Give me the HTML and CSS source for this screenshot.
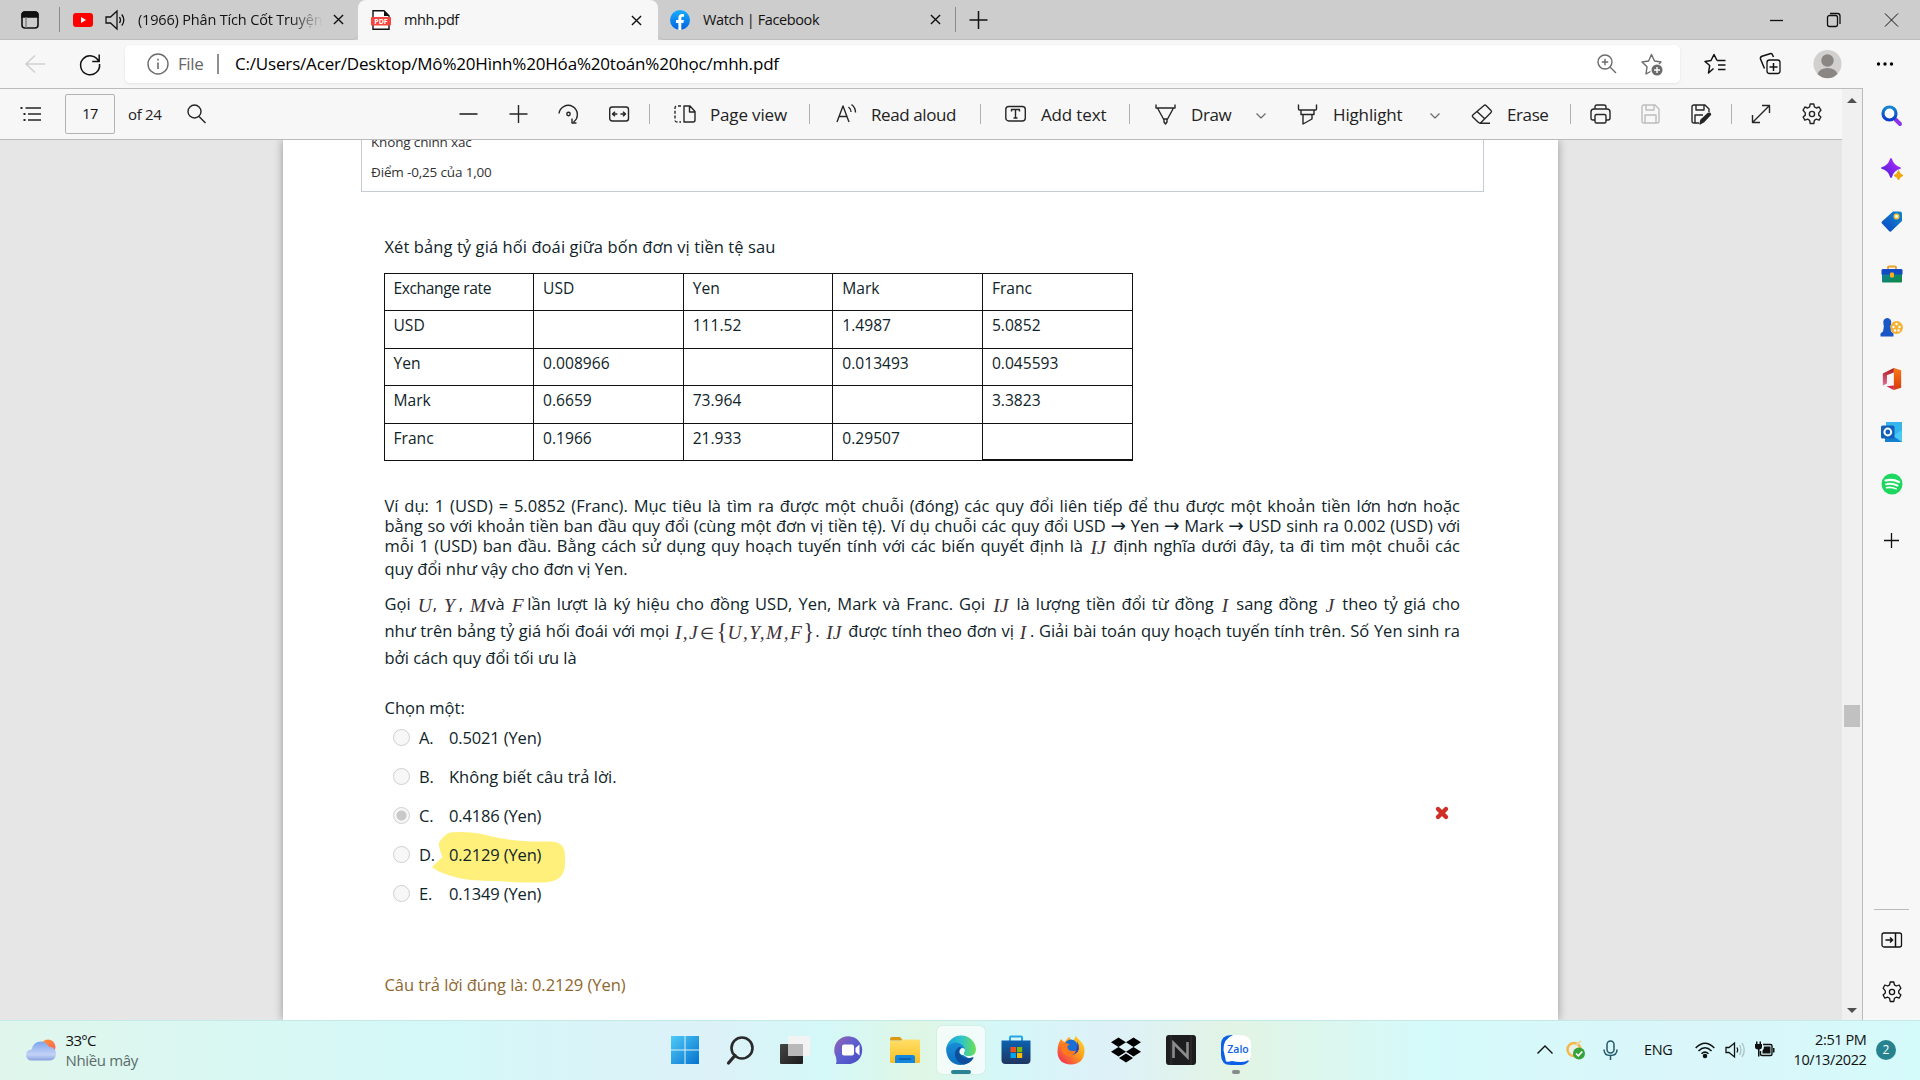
FILE: index.html
```html
<!DOCTYPE html>
<html lang="vi">
<head>
<meta charset="utf-8">
<title>mhh.pdf</title>
<link rel="stylesheet" href="styles.css">
</head>
<body>
<svg class="defs" width="0" height="0">
  <defs>
    <symbol id="close" viewBox="0 0 12 12"><path d="M1 1l10 10M11 1L1 11"/></symbol>
    <symbol id="gear" viewBox="0 0 22 22"><path d="M9.200 1h3.600l.6 2.900 1.900 1.100 2.800-1 1.800 3.200L17.700 9.900v2.200l2.200 1.900-1.800 3.200-2.800-1-1.900 1.100-.6 3.200H9.200l-.6-3.200-1.900-1.100-2.800 1-1.800-3.200L4.300 12.100V9.900L2.100 7.200 3.900 4l2.800 1 1.900-1.100z" stroke-linejoin="round"/><circle cx="11" cy="11" r="2.600"/></symbol>
    <symbol id="chev" viewBox="0 0 10 6"><path d="M.5 .5L5 5 9.500.5"/></symbol>
    <linearGradient id="gWin" x1="0" y1="0" x2="1" y2="1"><stop offset="0" stop-color="#4fcbf8"/><stop offset="1" stop-color="#0672cf"/></linearGradient>
    <linearGradient id="gMag" x1="0" y1="0" x2="0" y2="1"><stop offset="0" stop-color="#1787cf"/><stop offset="1" stop-color="#0a3bcb"/></linearGradient>
    <linearGradient id="gSpark" x1="0" y1="1" x2="1" y2="0"><stop offset="0" stop-color="#4a1fd6"/><stop offset="1" stop-color="#b52bff"/></linearGradient>
    <linearGradient id="gTag" x1="0" y1="1" x2="1" y2="0"><stop offset="0" stop-color="#0b43c9"/><stop offset="1" stop-color="#1389c6"/></linearGradient>
    <linearGradient id="gCase" x1="0" y1="0" x2="1" y2="1"><stop offset="0" stop-color="#1180a6"/><stop offset="1" stop-color="#0f8a3c"/></linearGradient>
    <linearGradient id="gOff" x1="0" y1="0" x2="0" y2="1"><stop offset="0" stop-color="#f77b16"/><stop offset="1" stop-color="#d8380c"/></linearGradient>
    <linearGradient id="gOffL" x1="0" y1="0" x2="0" y2="1"><stop offset="0" stop-color="#b01818"/><stop offset="1" stop-color="#e0709c"/></linearGradient>
    <linearGradient id="gChat" x1="0" y1="0" x2="1" y2="1"><stop offset="0" stop-color="#9a62b4"/><stop offset=".5" stop-color="#5a5fcf"/><stop offset="1" stop-color="#4a49c4"/></linearGradient>
    <linearGradient id="gFold" x1="0" y1="0" x2="0" y2="1"><stop offset="0" stop-color="#ffdf68"/><stop offset="1" stop-color="#fbbf22"/></linearGradient>
    <linearGradient id="gEdgeT" x1="0" y1="0" x2="1" y2="0"><stop offset="0" stop-color="#1b9ddb"/><stop offset=".5" stop-color="#2cc3cf"/><stop offset="1" stop-color="#6fdf4e"/></linearGradient>
    <linearGradient id="gEdgeL" x1="0" y1="0" x2="0" y2="1"><stop offset="0" stop-color="#1a8ed8"/><stop offset="1" stop-color="#0b6fc0"/></linearGradient>
    <linearGradient id="gStore" x1="0" y1="0" x2="0" y2="1"><stop offset="0" stop-color="#0b62b0"/><stop offset="1" stop-color="#1f3560"/></linearGradient>
    <linearGradient id="gFox" x1="1" y1="0" x2="0" y2="1"><stop offset="0" stop-color="#ffe030"/><stop offset=".45" stop-color="#ff9a1c"/><stop offset="1" stop-color="#ee1a5d"/></linearGradient>
    <linearGradient id="gTask" x1="0" y1="0" x2="1" y2="1"><stop offset="0" stop-color="#454545"/><stop offset="1" stop-color="#1c1c1c"/></linearGradient>
    <linearGradient id="gSun" x1="0" y1="0" x2="1" y2="1"><stop offset="0" stop-color="#ff9c2c"/><stop offset="1" stop-color="#ff5560"/></linearGradient>
    <linearGradient id="gCloud" x1="0" y1="0" x2="0" y2="1"><stop offset="0" stop-color="#7fa5ee"/><stop offset=".7" stop-color="#c3d2f5"/><stop offset="1" stop-color="#86a0e0"/></linearGradient>
    <linearGradient id="gFb" x1="0" y1="0" x2="0" y2="1"><stop offset="0" stop-color="#18acfe"/><stop offset="1" stop-color="#0163e0"/></linearGradient>
  </defs>
</svg>

<header class="tabs">
  <div class="tab tab-first">
    <svg class="i18 ink" viewBox="0 0 18 18"><rect x="1" y="1" width="16" height="16" rx="3" stroke-width="1.600"/><path d="M1 5V4a3 3 0 0 1 3-3h10a3 3 0 0 1 3 3v2H1z" fill="#111"/><path d="M5 6v11" stroke="#777"/></svg>
    <i class="bar"></i>
    <svg class="yt" viewBox="0 0 20 14"><rect width="20" height="14" rx="3" fill="#f00"/><path d="M8 4v6l5-3z" fill="#fff"/></svg>
    <svg class="i20 ink" viewBox="0 0 20 20"><path d="M1 7h4.500L12 1v18l-6.500-6H1zM14.500 7q2 3 0 6M16.800 4.500q4 5.500 0 11" stroke-width="1.300"/></svg>
    <span class="tabtext fade">(1966) Phân Tích Cốt Truyện</span>
    <svg class="x ink"><use href="#close"/></svg>
  </div>
  <div class="tab tab-active">
    <svg class="i20" viewBox="0 0 20 20"><path d="M2 .8h11l5 5V19.200H2z" fill="#fff" stroke="#111" stroke-width="1.400"/><path d="M13 1v5h5z" fill="#111"/><rect x="0" y="7" width="20" height="8.500" rx="1" fill="#f4443e"/><text x="10" y="13.700" class="pdfmark">PDF</text></svg>
    <span class="tabtext">mhh.pdf</span>
    <svg class="x ink"><use href="#close"/></svg>
  </div>
  <div class="tab tab-last">
    <svg class="i20" viewBox="0 0 20 20"><circle cx="10" cy="10" r="10" fill="url(#gFb)"/><path d="M8.400 20v-7H6v-3h2.400V8c0-2.600 1.500-4 3.800-4 .9 0 1.800.2 1.800.2v2.500h-1.200c-1.200 0-1.500.7-1.500 1.500V10h2.600l-.5 3h-2.100v7z" fill="#fff"/></svg>
    <span class="tabtext">Watch | Facebook</span>
    <svg class="x ink"><use href="#close"/></svg>
    <i class="bar"></i>
    <svg class="i18 ink" viewBox="0 0 18 18"><path d="M8.500 0v18M-.5 9h18" stroke-width="1.500"/></svg>
  </div>
  <div class="winbtns">
    <svg class="i14 ink" viewBox="0 0 14 14"><path d="M0 7.500h13"/></svg>
    <svg class="i14 ink" viewBox="0 0 14 14"><rect x=".5" y="2.500" width="10" height="11" rx="2"/><path d="M3 .5h7.500q2.500 0 2.500 2.500v8"/></svg>
    <svg class="i14 ink thin" viewBox="0 0 14 14"><path d="M0 .5l13 13M13 .5l-13 13"/></svg>
  </div>
</header>

<nav class="address">
  <svg class="i22 back" viewBox="0 0 22 22"><path d="M20 11H1M10 2.500L1 11 10 19.500"/></svg>
  <svg class="i22 ink" viewBox="0 0 22 22"><path d="M19.800 8.500A9.500 9.500 0 1 0 20.500 11M20.200 1.500v7h-7" stroke-width="1.500"/></svg>
  <div class="urlbox">
    <svg class="i22 grey" viewBox="0 0 22 22"><circle cx="11" cy="11" r="10"/><path d="M11 9.500v6.500M11 5.700v1.800" stroke-width="1.600"/></svg>
    <span class="scheme">File</span>
    <i class="ubar"></i>
    <span class="url">C:/Users/Acer/Desktop/Mô%20Hình%20Hóa%20toán%20học/mhh.pdf</span>
    <svg class="i20 grey" viewBox="0 0 20 20"><circle cx="8" cy="8" r="7"/><path d="M13 13l6 6M8 4.800v6.400M4.800 8h6.400"/></svg>
    <svg class="i22 grey" viewBox="0 0 22 22"><path d="M9.500 18.500L5 21l1-7.200L1 9l6.600-1L10.500 1.500 13.500 8l6.500 1-2 2" stroke-linejoin="round"/><circle cx="16" cy="17" r="5.500" fill="#6b6b6b" stroke="none"/><path d="M16 14v6M13 17h6" stroke="#fff"/></svg>
  </div>
  <svg class="i22 ink" viewBox="0 0 22 22"><path d="M9.500 15.500L4.500 20l1.200-7.500L1 8.500l6-1L10 1.500l3 6M13 7.500h8.500M14 12h7.500M14 16.500h7.500" stroke-width="1.500" stroke-linejoin="round"/></svg>
  <svg class="i22 ink" viewBox="0 0 22 22"><rect x="7" y="7" width="13" height="13.500" rx="2.500"/><path d="M13.500 10v8M9.500 14h8M4.500 15.500L.5 6Q0 4 2 3.200l8-2.500q2-.6 2.600 1.300L13.500 4" stroke-width="1.500"/></svg>
  <svg class="i28" viewBox="0 0 28 28"><circle cx="14.500" cy="14" r="14" fill="#d2d0ce"/><circle cx="14.500" cy="10.500" r="6.200" fill="#8a8683"/><path d="M4.500 24a10.300 8 0 0 1 20 0 14 14 0 0 1-20 0z" fill="#8a8683"/></svg>
  <svg class="i18" viewBox="0 0 18 18"><circle cx="2.500" cy="9" r="1.700"/><circle cx="9" cy="9" r="1.700"/><circle cx="15.500" cy="9" r="1.700"/></svg>
</nav>

<div class="main">
  <div class="viewer">
    <div class="pdfbar">
      <svg class="i22 tool" viewBox="0 0 22 22"><path d="M5.500 5H21M8 11h13M8 17h13"/><path d="M.5 5h2M3.500 11h2M3.500 17h2" stroke-width="2"/></svg>
      <span class="pagebox">17</span>
      <span class="tt small">of 24</span>
      <svg class="i20 tool" viewBox="0 0 20 20"><circle cx="7.500" cy="7.500" r="6.500"/><path d="M12 12.500l6.500 6.500"/></svg>
      <svg class="i20 tool" viewBox="0 0 20 20"><path d="M.5 10h18" stroke-width="1.600"/></svg>
      <svg class="i20 tool" viewBox="0 0 20 20"><path d="M.5 10h18M9.500 1v18"/></svg>
      <svg class="i22 tool" viewBox="0 0 22 22"><path d="M1 10.500A9.200 9.200 0 1 1 15.500 19M14 15.500V20h4.500"/><circle cx="10.500" cy="11" r="1.700"/></svg>
      <svg class="i20 tool" viewBox="0 0 20 20"><rect x=".7" y="3" width="18.800" height="14" rx="2.500"/><path d="M3.500 10h4.800M11.500 10h5M6 7.700L3.500 10 6 12.300M14 7.700l2.500 2.300-2.500 2.300"/></svg>
      <i class="tsep"></i>
      <svg class="i22 tool" viewBox="0 0 22 22"><path d="M10 3h6l5 5.500V17q0 2-2 2h-9zM15.500 3v6H21"/><path d="M7 3H3Q1 3 1 5v12q0 2 2 2h4" stroke-dasharray="3 1.800"/></svg>
      <span class="tt">Page view</span>
      <i class="tsep"></i>
      <svg class="i22 tool" viewBox="0 0 22 22"><path d="M1 19L7 3l6 16M3.200 13.500h7.700M12.500 4q2.500 2 2.500 5M15.500 1.500q4 3 4 8"/></svg>
      <span class="tt snug">Read aloud</span>
      <i class="tsep"></i>
      <svg class="i22 tool" viewBox="0 0 22 22"><rect x=".8" y="3.500" width="19.500" height="14.500" rx="3"/><path d="M6.500 8.500v-2h8v2M10.500 6.500v8.500M8.500 15h4"/></svg>
      <span class="tt">Add text</span>
      <i class="tsep"></i>
      <svg class="i22 tool" viewBox="0 0 22 22"><path d="M1 1.500V5h19V1.500M2.500 5l6.500 12v2l1.500 2 1.500-2v-2L18.500 5M8.500 16h4"/></svg>
      <span class="tt snug">Draw</span>
      <svg class="chev tool"><use href="#chev"/></svg>
      <svg class="i22 tool" viewBox="0 0 22 22"><path d="M1.500 1.500V6q0 1 1 1h16q1 0 1-1V1.500M4 7v4.500h13V7M6 11.500V21l9-5v-4.500"/></svg>
      <span class="tt">Highlight</span>
      <svg class="chev tool"><use href="#chev"/></svg>
      <svg class="i22 tool" viewBox="0 0 22 22"><path d="M13 2.500q1-1 2 0l5 5q1 1 0 2L10 19.500q-1 1-2.500 0L1.800 14q-1-1 0-2zM6 8.500l8 7.500M8.500 20.300H19"/></svg>
      <span class="tt snug">Erase</span>
      <i class="tsep"></i>
      <svg class="i22 tool" viewBox="0 0 22 22"><path d="M5 6V4q0-2 2-2h7q2 0 2 2v2M5 17H3q-2 0-2-2V9q0-3 3-3h13q3 0 3 3v6q0 2-2 2h-2"/><rect x="5" y="11.500" width="11" height="8.500" rx="1.500"/></svg>
      <svg class="i20 tool off" viewBox="0 0 20 20"><path d="M3 1h11l4 4v12q0 2-2 2H3q-2 0-2-2V3q0-2 2-2zM5 1v5h8V1M4 19v-8h11v8"/></svg>
      <svg class="i20 tool" viewBox="0 0 20 20"><path d="M8 19H3q-2 0-2-2V3q0-2 2-2h11l4 4v3M5 1v5h8V1M4 19v-8h8"/><path d="M9 20l1-4 7-6.500q2-1 2.500 1l-7 7.500z" fill="#222"/></svg>
      <i class="tsep"></i>
      <svg class="i20 tool" viewBox="0 0 20 20"><path d="M1.500 18.500l17-17M11 1.500h7.500V9M1.500 11v7.500H9"/></svg>
      <svg class="i22 tool"><use href="#gear"/></svg>
    </div>
    <div class="canvas">
      <article class="page">
        <section class="grade">
          <p>Không chính xác</p>
          <p>Điểm -0,25 của 1,00</p>
        </section>
        <section class="question">
          <p class="lead">Xét bảng tỷ giá hối đoái giữa bốn đơn vị tiền tệ sau</p>
          <table class="rates">
            <tr><td class="corner">Exchange rate</td><td>USD</td><td>Yen</td><td>Mark</td><td>Franc</td></tr>
            <tr><td>USD</td><td></td><td>111.52</td><td>1.4987</td><td>5.0852</td></tr>
            <tr><td>Yen</td><td>0.008966</td><td></td><td>0.013493</td><td>0.045593</td></tr>
            <tr><td>Mark</td><td>0.6659</td><td>73.964</td><td></td><td>3.3823</td></tr>
            <tr><td>Franc</td><td>0.1966</td><td>21.933</td><td>0.29507</td><td class="last"></td></tr>
          </table>
          <div class="para tight">
            <p class="full">Ví dụ: 1 (USD) = 5.0852 (Franc). Mục tiêu là tìm ra được một chuỗi (đóng) các quy đổi liên tiếp để thu được một khoản tiền lớn hơn hoặc</p>
            <p class="full long">bằng so với khoản tiền ban đầu quy đổi (cùng một đơn vị tiền tệ). Ví dụ chuỗi các quy đổi USD <span class="arrow">→</span> Yen <span class="arrow">→</span> Mark <span class="arrow">→</span> USD sinh ra 0.002 (USD) với</p>
            <p class="full">mỗi 1 (USD) ban đầu. Bằng cách sử dụng quy hoạch tuyến tính với các biến quyết định là <em class="m">IJ</em> định nghĩa dưới đây, ta đi tìm một chuỗi các</p>
            <p class="end">quy đổi như vậy cho đơn vị Yen.</p>
          </div>
          <div class="para loose">
            <p class="full">Gọi <em class="m near">U</em>, <em class="m near">Y</em>&#8201;, <em class="m near">M</em>và <em class="m near">F</em>&#8201;lần lượt là ký hiệu cho đồng USD, Yen, Mark và Franc. Gọi <em class="m">IJ</em> là lượng tiền đổi từ đồng <em class="m">I</em> sang đồng <em class="m">J</em> theo tỷ giá cho</p>
            <p class="full">như trên bảng tỷ giá hối đoái với mọi <em class="m set">I,J<b>∈</b><b class="brace">{</b>U,Y,M,F<b class="brace">}</b></em>. <em class="m">IJ</em> được tính theo đơn vị <em class="m near">I</em>&#8201;. Giải bài toán quy hoạch tuyến tính trên. Số Yen sinh ra</p>
            <p>bởi cách quy đổi tối ưu là</p>
          </div>
          <p class="choose">Chọn một:</p>
          <ul class="options">
            <li><i class="radio"></i><span>A.</span><span>0.5021 (Yen)</span></li>
            <li><i class="radio"></i><span>B.</span><span class="words">Không biết câu trả lời.</span></li>
            <li><i class="radio on"></i><span>C.</span><span>0.4186 (Yen)</span><svg class="wrong" viewBox="0 0 14 14"><path d="M3 3l8 8M11 3l-8 8"/></svg></li>
            <li><svg class="marker" viewBox="0 0 134 52"><path d="M6.500 11.500Q13 .5 20 .3 40-1 58 4q20 5 42 5.500h20q13 1 13 14v10q-1 16-21 17-18 .5-46-1.500-32 0-45-4.500Q5 40 0 35q6-6 10.500-10Q8 20 6.500 11.500z"/></svg><i class="radio"></i><span>D.</span><span>0.2129 (Yen)</span></li>
            <li><i class="radio"></i><span>E.</span><span>0.1349 (Yen)</span></li>
          </ul>
          <p class="answer">Câu trả lời đúng là: 0.2129 (Yen)</p>
        </section>
      </article>
    </div>
  </div>
  <div class="scroll"><i class="up"></i><i class="thumb"></i><i class="down"></i></div>
  <aside class="side">
    <svg class="i22" viewBox="0 0 22 22"><path d="M14.500 14.500L19 19" stroke="#8b34e8" stroke-width="4" stroke-linecap="round"/><circle cx="8.500" cy="8.500" r="6.500" fill="#fff" stroke="url(#gMag)" stroke-width="3.200"/></svg>
    <svg class="i22" viewBox="0 0 22 22"><path d="M10 1q2 7 9 9-7 2-9 9-2-7-9-9 7-2 9-9z" fill="url(#gSpark)" stroke="url(#gSpark)" stroke-width="1.800" stroke-linejoin="round"/><path d="M17.500 12.500q1 4 4.500 5-3.500 1-4.500 4.500-1-3.500-4.500-4.500 3.500-1 4.500-5z" fill="#f2a60c" stroke="#f2a60c"/></svg>
    <svg class="i22" viewBox="0 0 22 22"><path d="M12 1.500h7q2 0 2 2V11L10 21.500Q9 22 8 21L1 13.500Q0 12.500 1 11.500z" fill="url(#gTag)"/><circle cx="15.500" cy="6.500" r="2.200" fill="#fff" stroke="#ffc02b" stroke-width="1.500"/></svg>
    <svg class="i22" viewBox="0 0 22 22"><path d="M7 7V4.500q0-1 1-1h6q1 0 1 1V7" fill="none" stroke="#e9a12b" stroke-width="1.800"/><rect x="1" y="9" width="20" height="10.500" rx="1" fill="url(#gCase)"/><path d="M2 6h18q1 0 1.500 1v4.500H.5V7Q1 6 2 6z" fill="#1249c4"/><rect x="9" y="9.500" width="4" height="5" rx="1" fill="#f6ae22"/></svg>
    <svg class="i22" viewBox="0 0 22 22"><circle cx="15.500" cy="11.500" r="6.500" fill="#f3b233"/><g fill="#fff"><circle cx="15.500" cy="8" r="1.200"/><circle cx="12.500" cy="11" r="1.200"/><circle cx="18.500" cy="11" r="1.200"/><circle cx="14" cy="14.500" r="1.200"/><circle cx="17.500" cy="14.500" r="1.200"/></g><path d="M2.500 7.500a4 4 0 1 1 7.500 0v2H9l1 6 2.500 2V20.500H-.5v-3L2 15.500l1-6h-.5z" fill="#1857c5"/></svg>
    <svg class="i22" viewBox="0 0 22 24"><path d="M13 0l8 2.500v19L13 24z" fill="url(#gOff)"/><path d="M13 0v5L5.500 8v9L1 19V6z" fill="url(#gOffL)"/><path d="M5 20l8-1v5z" fill="#d5264a"/></svg>
    <svg class="i22" viewBox="0 0 22 22"><rect x="5" y="1" width="16" height="14" fill="#36b4ee"/><path d="M4 21V11l9 5 8-6v11z" fill="#1480d0"/><path d="M12 15l9-6v12z" fill="#4dc9f6"/><rect y="4.500" width="13.500" height="13" rx="1.500" fill="#0f62b8"/><circle cx="6.800" cy="11" r="3.400" fill="none" stroke="#fff" stroke-width="2"/></svg>
    <svg class="i22" viewBox="0 0 22 22"><circle cx="11" cy="11" r="10.500" fill="#1ed760"/><g fill="none" stroke="#fff" stroke-linecap="round"><path d="M4.500 7.500q7-2 13.500 1.500" stroke-width="2.200"/><path d="M5 11.300q6-1.500 11.500 1.300" stroke-width="1.900"/><path d="M5.500 14.700q5-1 9.700 1.200" stroke-width="1.600"/></g></svg>
    <svg class="i22 ink" viewBox="0 0 22 22"><path d="M10.500 3v15M3 10.500h15"/></svg>
    <i class="line"></i>
    <svg class="i22 ink" viewBox="0 0 22 22"><rect x="1" y="4" width="19.500" height="14" rx="2"/><path d="M14.500 4v14M4.500 11h7M9 8.500l2.500 2.500L9 13.500" stroke-width="1.500"/></svg>
    <svg class="i22 ink"><use href="#gear"/></svg>
  </aside>
</div>

<footer class="taskbar">
  <div class="weather">
    <svg viewBox="0 0 30 22"><circle cx="22" cy="8" r="7.500" fill="url(#gSun)"/><path d="M5.500 21.500a5.500 5.500 0 0 1 0-11Q7.500 2.500 15 2.500q5 0 7.500 5Q30 8 30 15q-.5 6-6 6.500z" fill="url(#gCloud)"/></svg>
    <div><p class="temp">33°C</p><p class="dim">Nhiều mây</p></div>
  </div>
  <div class="apps">
    <span><svg viewBox="0 0 30 30"><path d="M1 1h13.500v13.500H1zM15.500 1H29v13.500H15.500zM1 15.500h13.500V29H1zM15.500 15.500H29V29H15.500z" fill="url(#gWin)"/></svg></span>
    <span><svg viewBox="0 0 30 30"><circle cx="17" cy="13" r="10.500" fill="none" stroke="#2a2a2a" stroke-width="2.600"/><path d="M10 20.500L3.500 28" stroke="#2a2a2a" stroke-width="3.200" stroke-linecap="round"/></svg></span>
    <span><svg viewBox="0 0 30 30"><rect y="9" width="23" height="20" rx="1" fill="url(#gTask)"/><rect x="8" y="1" width="22" height="20" rx="1" fill="#f3f3f3"/><path d="M8 9h15v12H8z" fill="#b9b9b9"/></svg></span>
    <span><svg viewBox="0 0 30 30"><path d="M1 29q1-3 0-7A14 14 0 1 1 15.500 29z" fill="url(#gChat)"/><rect x="7" y="9.500" width="12" height="11" rx="2" fill="#fff"/><path d="M20.500 13l4-3.500v11l-4-3.500z" fill="#fff"/></svg></span>
    <span><svg viewBox="0 0 30 30"><path d="M0 4q0-2 2-2h8l3 3.500H0z" fill="#d99a10"/><path d="M0 6h11l2-1.500h15q2 0 2 2V27q0 1-1.500 1h-27Q0 28 0 27z" fill="url(#gFold)"/><path d="M5 28v-6q0-2 2-2h16q2 0 2 2v6z" fill="#1486dc"/><path d="M9 24h12" stroke="#0b559e" stroke-width="1.400"/></svg></span>
    <span class="tile"><svg viewBox="0 0 30 30"><path d="M.2 13Q2 7 10 6.500q8 0 10 7l-2 7q5 4 9.500 2.500Q23 30 15 30 2 29.500.2 16z" fill="url(#gEdgeL)"/><path d="M.3 13A15 15 0 0 1 30 14q0 6.500-6.500 7-4.500 0-5.500-1.500-.5-1 .5-2 1-3-.5-5.500-3-4.500-9-4.500Q3 8.500.3 13z" fill="url(#gEdgeT)"/><path d="M13 12q-5 3.500-4 9 2 7.500 9 8.500 6.500-1.500 9.500-6.500.3-1-1-.7-6 2.200-10.500-1-3.500-3-2-7 1-2 1.500-2z" fill="#0c4f9c"/><path d="M15 13.500q3-1.500 4 1.500 0 1.500-1 2.700-.7 1.500.8 2.500-3.800.3-5.300-2.200-.5-3 1.500-4.500z" fill="#f0fbfa"/></svg><i class="running"></i></span>
    <span><svg viewBox="0 0 30 30"><path d="M9 6V2.500q0-1 1-1h10q1 0 1 1V6" fill="none" stroke="#25a6e6" stroke-width="2"/><path d="M.5 5.500h29V25q0 4-4 4h-21q-4 0-4-4z" fill="url(#gStore)"/><path d="M9.500 12H15v5.200H9.500z" fill="#f25022"/><path d="M16 12h5.200v5.200H16z" fill="#7fba00"/><path d="M9.500 18H15v5H9.500z" fill="#00a4ef"/><path d="M16 18h5.200v5H16z" fill="#ffb900"/></svg></span>
    <span><svg viewBox="0 0 30 30"><path d="M5 4q1 2 4 3Q12 2 14 2q-.5 3 3 4l3-5q1 2 3.500 4 5.500 5 5 12-1 12-13.500 12.500Q2 29 1.500 17 1.500 9 5 4z" fill="url(#gFox)"/><circle cx="15" cy="11" r="6.500" fill="#1a6fd6"/><path d="M21 6q5 9-2 13-4 2-6-1 4 1 5-1 4-4 3-11z" fill="#2a46b8"/><path d="M5 10q4-3 9-.5-3 .5-2.500 3 1 5 8.500 3-1.500 5-7.500 5Q5 20 5 10z" fill="#ff7a1c"/></svg></span>
    <span><svg viewBox="0 0 30 30"><path d="M7.500 2.500L15 7.300 7.500 12 0 7.300zM22.500 2.500L30 7.300 22.500 12 15 7.300zM7.500 12L15 16.700l-7.500 4.800L0 16.700zM22.500 12l7.500 4.700-7.500 4.800-7.500-4.800zM15 18.500l7 4.500-7 4.500L8 23z"/></svg></span>
    <span><svg viewBox="0 0 30 30"><rect width="30" height="30" rx="3" fill="#1d1d1f"/><path d="M5 0v30M25 0v30" stroke="#333"/><path d="M7.500 23V8l14 14V7" fill="none" stroke="#8b8b8b" stroke-width="2.600"/></svg></span>
    <span><svg viewBox="0 0 30 30"><path d="M10 0h8v20l10 6q-3 4-8 4H10Q0 30 0 20V10Q0 0 10 0z" fill="#0b5fe6"/><path d="M12 0h8q10 0 10 10v9q0 8-10 8-5 0-9-1-3 1-6 .5Q4 22 2.500 15 2 4 12 0z" fill="#fff"/><text x="17" y="17.500" class="zalo">Zalo</text></svg><i class="idle"></i></span>
  </div>
  <div class="tray">
    <svg class="caret" viewBox="0 0 16 9"><path d="M.5 8.500L8 1l7.500 7.500"/></svg>
    <svg class="i20" viewBox="0 0 20 20"><circle cx="8" cy="9.500" r="6.500" fill="#e9efe9" stroke="#f3b84a" stroke-width="2.500"/><path d="M10 5l5-4" stroke="#ead9a0" stroke-width="2"/><circle cx="13" cy="13.500" r="6" fill="#37a13c"/><path d="M10 13.500l2.300 2.300 4-4.300" fill="none" stroke="#fff" stroke-width="1.700"/></svg>
    <svg class="i20" viewBox="0 0 20 20"><rect x="4" y="1" width="7" height="12" rx="3.500" fill="none" stroke="#235a6b" stroke-width="1.500"/><path d="M1 9.500q0 6 6.500 6t6.500-6M7.500 15.500V20" fill="none" stroke="#235a6b" stroke-width="1.500"/></svg>
    <span class="lang">ENG</span>
    <svg class="i20 ink" viewBox="0 0 20 20"><path d="M.7 8q9.300-9.500 18.600 0M3.500 11q6.500-6.500 13 0M6.500 13.800q3.500-3.300 7 0" stroke-width="1.500"/><circle cx="10" cy="16" r="1.600" fill="#111"/></svg>
    <svg class="i20 ink" viewBox="0 0 20 20"><path d="M1 7.500h3L9.500 3v14L4 12.500H1zM12 7.500q1.500 2.500 0 5" stroke-width="1.300"/><path d="M14.500 5q3 5 0 10M17 3q4.500 7 0 14" stroke="#a9c0c2"/></svg>
    <svg class="i20" viewBox="0 0 20 20"><path d="M8 4.500h7.500q1.500 0 1.500 1.500v8q0 1.500-1.500 1.500H7q-1.500 0-1.500-1.500v-3" fill="none" stroke="#111" stroke-width="1.400"/><path d="M9 6.500h6.500v7H7.500v-3Q9 9.500 9 6.500zM18 8h1.500v4.500H18zM0 4h1V1.500h1.500V4h2V1.500H6V4h1v3q0 2-2.500 2.500v7h-1.500V9.500Q0 9 0 7z" fill="#111"/></svg>
    <div class="clock"><p>2:51 PM</p><p>10/13/2022</p></div>
    <span class="badge">2</span>
  </div>
</footer>
</body>
</html>
```
FILE: styles.css
```css
* { box-sizing: border-box; }
body { margin: 0; width: 1920px; height: 1080px; overflow: hidden; background: #f7f7f7; font-family: "Open Sans", "Noto Sans", "DejaVu Sans", sans-serif; color: #111; display: flex; flex-direction: column; }
p, ul { margin: 0; padding: 0; }
svg { display: block; overflow: visible; }
i { display: block; font-style: normal; }
.defs { position: absolute; }
.i14 { width: 14px; height: 14px; }
.i18 { width: 18px; height: 18px; }
.i20 { width: 20px; height: 20px; }
.i22 { width: 22px; height: 22px; }
.i28 { width: 28px; height: 28px; }
.ink { fill: none; stroke: #111; stroke-width: 1.3; }
.thin { stroke-width: 1; }
.grey { fill: none; stroke: #6b6b6b; stroke-width: 1.4; }
.back { fill: none; stroke: #cfcfcf; stroke-width: 1.5; }

/* tab strip */
.tabs { display: flex; height: 40px; flex: none; background: #cdcdcd; }
.tab { display: grid; align-items: center; height: 40px; }
.tab-first { width: 358px; padding-left: 21px; grid-template-columns: 38px 14px 32px 33px 195px 20px; border-bottom: 1px solid #bdbdbd; border-bottom-right-radius: 6px; }
.tab-active { width: 300px; padding-left: 13px; grid-template-columns: 33px 227px 20px; background: #f7f7f7; border-radius: 8px 8px 0 0; }
.tab-last { width: 1112px; padding-left: 12px; grid-template-columns: 33px 227px 25px 15px 20px; border-bottom: 1px solid #bdbdbd; border-bottom-left-radius: 6px; }
.bar { width: 1px; height: 25px; background: #8a8a8a; }
.yt { width: 20px; height: 14px; }
.x { width: 11px; height: 11px; stroke-width: 1.5; }
.tabtext { font-size: 14.5px; letter-spacing: -0.4px; white-space: nowrap; margin-top: -1px; }
.fade { width: 185px; letter-spacing: -0.17px; -webkit-mask-image: linear-gradient(90deg, #000 82%, transparent 100%); mask-image: linear-gradient(90deg, #000 82%, transparent 100%); }
.pdfmark { font: 700 7px "Open Sans", sans-serif; fill: #fff; text-anchor: middle; }
.winbtns { display: grid; grid-template-columns: 57px 58px 14px; align-items: center; border-bottom: 1px solid #bdbdbd; flex: 1; }

/* address row */
.address { display: grid; grid-template-columns: 54px 46px 1579px 56px 53px 63px 20px; align-items: center; height: 48px; flex: none; padding-left: 25px; }
.urlbox { display: grid; grid-template-columns: 31px 39px 18px 1362px 44px 22px; align-items: center; width: 1555px; height: 38px; padding-left: 22px; background: #fff; border-radius: 5px; box-shadow: 0 1px 3px rgba(0, 0, 0, .08); }
.scheme { font-size: 17px; letter-spacing: -0.4px; color: #666; margin-top: -2px; }
.url { font-size: 17px; letter-spacing: -0.18px; white-space: nowrap; color: #000; margin-top: -2px; }
.ubar { width: 2px; height: 20px; background: #8f8f8f; }

/* viewer toolbar */
.main { display: flex; height: 932px; flex: none; }
.viewer { width: 1842px; flex: none; border-top: 1px solid #bbb; display: flex; flex-direction: column; }
.pdfbar { display: grid; grid-template-columns: 45px 63px 59px 272px 50px 49px 51px 40px 25px 36px 99px 27px 35px 109px 25px 36px 88px 26px 36px 65px 41px 36px 97px 41px 36px 63px 20px 51px 50px 40px 20px 50px 22px; align-items: center; height: 51px; padding-left: 20px; border-bottom: 1px solid #bbb; flex: none; }
.tool { fill: none; stroke: #262626; stroke-width: 1.4; stroke-linejoin: round; }
.off { stroke: #bdbdbd; }
.chev { width: 10px; height: 6px; stroke: #666; stroke-width: 1.1; margin-top: 4px; }
.tt { font-size: 17px; letter-spacing: -0.15px; white-space: nowrap; color: #222; }
.snug { letter-spacing: -0.4px; }
.small { font-size: 15px; letter-spacing: -0.3px; }
.tsep { width: 1px; height: 20px; background: #b0b0b0; }
.pagebox { width: 50px; height: 40px; border: 1px solid #b3b3b3; border-radius: 2px; text-align: center; font-size: 14.5px; line-height: 38px; letter-spacing: -0.5px; }

/* document page */
.canvas { flex: 1; overflow: hidden; background: #e6e6e6; padding-left: 283px; }
.page { width: 1275px; height: 100%; background: #fff; padding-left: 78px; box-shadow: 0 0 9px rgba(0, 0, 0, .35); color: #0f2429; overflow: hidden; }
.grade { width: 1123px; height: 52px; border: 1px solid #c5ccd6; border-top: 0; padding-left: 9px; font-size: 13.5px; letter-spacing: -0.16px; line-height: 20px; color: #333; overflow: hidden; }
.grade p { white-space: nowrap; margin: -8px 0 18px; }
.question { width: 1075.5px; margin-left: 23.5px; font-size: 16.5px; }
.lead { padding-top: 43px; line-height: 24px; letter-spacing: .09px; }
.rates { width: 749px; margin: 14px 0 0 -1px; border-collapse: collapse; table-layout: fixed; }
.rates td { height: 37.4px; border: 1.5px solid #111; padding: 2px 8px 0 9px; line-height: 24px; vertical-align: top; font-size: 15.6px; }
.rates .corner { letter-spacing: -0.4px; }
.rates .last { border-bottom-width: 2px; }
.para p { white-space: nowrap; }
.full { text-align: justify; text-align-last: justify; }
.long { letter-spacing: -0.04px; }
.tight { margin-top: 35px; }
.tight p { height: 20px; line-height: 20px; }
.tight .end { padding-top: 3px; }
.loose { margin-top: 14px; }
.loose p { height: 27px; line-height: 27px; }
.arrow { font-family: "DejaVu Sans", sans-serif; font-size: 18.5px; line-height: 1px; }
.m { font-family: "Liberation Serif", serif; font-style: italic; font-size: 19.5px; line-height: 1px; color: #3d3338; padding: 0 2px; position: relative; top: 1.5px; }
.near { padding: 0 1px; }
.m b { font-weight: 400; font-style: normal; font-size: 16px; margin: 0 1px; }
.set { letter-spacing: 1.4px; padding: 0 1px; }
.m .brace { font-size: 23px; margin: 0; letter-spacing: 0; }
.choose { margin-top: 25px; line-height: 24px; }
.options { list-style: none; margin-top: -2px; }
.options li { display: grid; grid-template-columns: 26px 30px 986px 16px; align-items: center; height: 39px; padding-left: 8.5px; position: relative; letter-spacing: -0.15px; }
.options li > span { z-index: 1; white-space: nowrap; }
.options .words { letter-spacing: 0; }
.radio { width: 17px; height: 17px; border: 1.5px solid #cfcfcf; border-radius: 50%; background: #f7f7f7; }
.radio.on { background: radial-gradient(circle, #c9c9c9 0 4.5px, #f7f7f7 5.5px); }
.wrong { width: 14px; height: 14px; stroke: #cf2f24; stroke-width: 4.4; stroke-linecap: round; margin-top: -6px; }
.marker { position: absolute; left: 47px; top: -3px; width: 134px; height: 52px; fill: #fff07c; }
.answer { margin-top: 60px; line-height: 24px; letter-spacing: -0.04px; color: #8e662e; }

.scroll { width: 20px; border-top: 1px solid #bbb; background: #f0f0f0; display: grid; grid-template-rows: 14px 624px 286px; justify-items: center; align-items: end; flex: none; }
.up, .down { border: 5.5px solid transparent; }
.up { border-bottom-color: #505050; border-top: 0; }
.down { border-top-color: #505050; border-bottom: 0; }
.thumb { width: 16px; height: 22px; background: #c1c1c1; }

.side { width: 58px; border-left: 1px solid #bbb; padding-top: 2px; display: grid; grid-template-rows: repeat(8, 52.6px) 61px 338px 60px 44px; place-items: center; align-content: start; }
.line { width: 35px; height: 1px; background: #bbb; align-self: end; }

/* taskbar */
.taskbar { height: 60px; flex: none; display: grid; grid-template-columns: 631.5px 879.5px 1fr; align-items: center; padding: 0 0 1px 26px; box-shadow: inset 0 1px #c3e9e8; background: linear-gradient(90deg, #e0f6ec 0, #d4f9f8 22%, #d8f4f8 30%, #dcf2f8 37%, #d4f8f8 43%, #dff6e4 48%, #d4f7f8 52%, #def1f8 58%, #e2f4e4 64.5%, #d5fafa 74%, #daf6fa 88%, #d5fafa 100%); }
.weather { display: grid; grid-template-columns: 39.5px auto; align-items: center; justify-content: start; font-size: 15px; line-height: 20px; }
.weather svg { width: 30px; height: 22px; }
.temp { letter-spacing: -0.7px; }
.dim { color: #5b6b6b; letter-spacing: -0.35px; }
.apps { display: grid; grid-template-columns: repeat(11, 55.1px); }
.apps span { display: grid; place-items: center; height: 48px; position: relative; }
.apps svg { width: 30px; height: 30px; z-index: 1; }
.apps .tile { width: 48px; justify-self: center; background: rgba(255, 255, 255, .65); border-radius: 5px; box-shadow: 0 0 1px rgba(0, 0, 0, .25); }
.running, .idle { position: absolute; bottom: 0; height: 4px; border-radius: 2px; }
.running { width: 20px; background: #2b8292; }
.idle { width: 8px; background: #868c8a; }
.zalo { font: 600 10.5px "Open Sans", sans-serif; fill: #0b62e6; text-anchor: middle; }
.tray { display: grid; grid-template-columns: 29px 37px 41px 51px 30px 30px 20px 91.5px 29.5px; align-items: center; font-size: 14.5px; line-height: 20px; }
.caret { width: 16px; height: 9px; fill: none; stroke: #111; stroke-width: 1.4; }
.lang { letter-spacing: -0.3px; }
.clock { text-align: right; letter-spacing: -0.4px; }
.badge { justify-self: end; width: 20px; height: 20px; border-radius: 50%; background: #26828f; color: #fff; font-size: 12px; text-align: center; }
```
